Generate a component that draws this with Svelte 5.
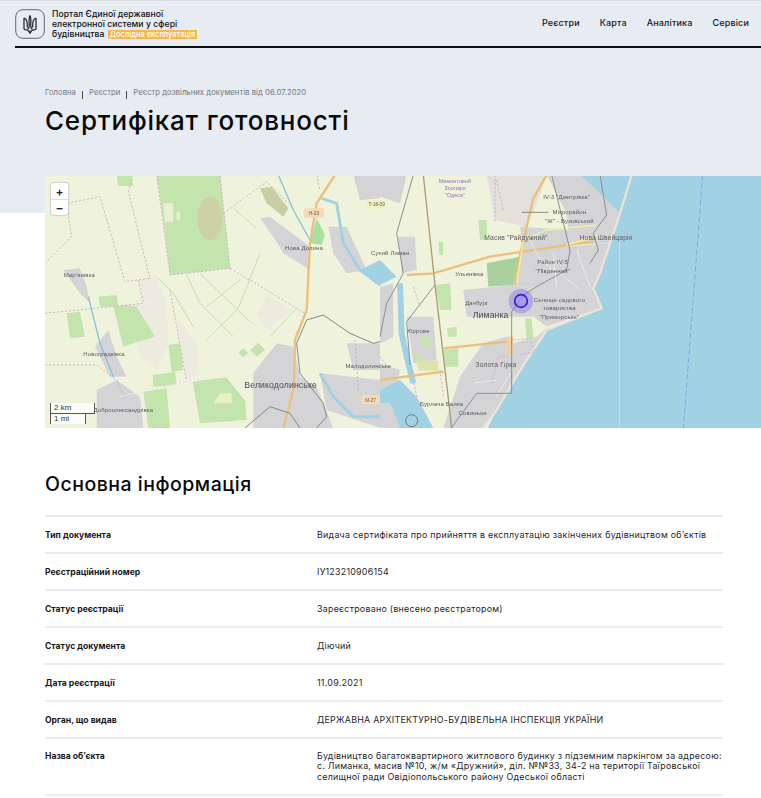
<script>
  const nav = ['Реєстри', 'Карта', 'Аналітика', 'Сервіси'];
  const crumbs = ['Головна', 'Реєстри', 'Реєстр дозвільних документів від 06.07.2020'];
  const rows = [
    ['Тип документа', 'Видача сертифіката про прийняття в експлуатацію закінчених будівництвом об’єктів'],
    ['Реєстраційний номер', 'ІУ123210906154'],
    ['Статус реєстрації', 'Зареєстровано (внесено реєстратором)'],
    ['Статус документа', 'Діючий'],
    ['Дата реєстрації', '11.09.2021'],
    ['Орган, що видав', 'ДЕРЖАВНА АРХІТЕКТУРНО-БУДІВЕЛЬНА ІНСПЕКЦІЯ УКРАЇНИ'],
    ['Назва об’єкта', 'Будівництво багатоквартирного житлового будинку з підземним паркінгом за адресою: с. Лиманка, масив №10, ж/м «Дружний», діл. №№33, 34-2 на території Таїровської селищної ради Овідіопольського району Одеської області']
  ];
  const leftGreen = [
    '470,15 660,15 690,295 510,315 490,150', '350,15 395,15 400,48 355,48', '295,380 350,375 355,410 300,410',
    '200,430 240,425 255,500 210,505', '340,410 380,405 410,410 465,500 400,520 370,530', '505,525 540,520 550,600 515,605',
    '458,615 525,605 530,645 460,650', '430,665 500,655 510,774 445,774', '578,635 680,620 735,690 740,750 600,760',
    '715,548 730,535 745,550 728,562', '750,540 775,518 795,540 770,560'
  ];
  const leftGrey = [
    '780,145 810,140 930,230 930,300 850,250 830,215', '985,170 1040,170 1100,300 1040,310 1000,250',
    '190,300 240,295 260,350 270,400 240,370', '285,530 325,480 350,560 380,620 330,620',
    '290,660 350,630 420,680 430,774 290,774', '760,610 830,520 880,530 900,620 950,650 1000,774 760,774',
    '1040,520 1140,520 1140,600 1060,600', '960,610 1140,630 1140,774 980,720', '1060,15 1140,15 1140,85 1080,90'
  ];
  const leftBeige = ['415,330 470,320 500,400 430,400', '530,440 590,520 600,610 560,630', '380,405 500,400 505,525 470,600 420,560', '800,380 880,420 800,480 770,430'];
  const rightGrey = [
    '500,15 750,15 720,130 690,220 570,225 560,130',
    '420,170 570,180 570,235 430,240',
    '420,240 690,220 660,310 640,355 600,400 470,360 405,345',
    '250,360 400,345 470,360 640,355 665,415 600,435 500,470 460,440 390,440 260,440',
    '310,520 380,500 400,520 470,500 500,475 440,570 400,635 350,720 310,774 190,774 240,620',
    '0,350 40,340 40,500 0,520', '55,200 105,200 110,300 65,310', '80,440 160,440 170,570 100,580', '0,580 60,600 50,660 0,660',
    '0,15 80,15 60,100 0,80', '0,700 30,700 60,774 0,774'
  ];
  const rightGreen = ['320,280 420,260 400,345 325,350', '165,345 210,340 215,420 180,420', '200,475 230,470 230,500 205,500', '120,500 150,500 150,530 125,530', '105,550 125,550 125,575 105,575', '175,215 190,215 190,255 178,255', '295,150 320,150 320,210 300,210', '435,445 455,445 460,505 440,510', '190,540 235,535 235,590 195,590', '110,572 175,572 175,602 115,602'];
</script>

<div class="page">
  <section class="hero">
    <header class="top">
      <a class="brand" href="#top">
        <svg class="logo" viewBox="0 0 30 30" width="30" height="30" aria-hidden="true">
          <path d="M9 .7h12c5.5 0 8.3 2.8 8.3 8.3v12c0 5.5-2.8 8.3-8.3 8.3H9C3.5 29.3.7 26.500.7 21V9C.7 3.500 3.500.700 9 .700z" fill="none" stroke="#56585c" stroke-width=".9"/>
          <path d="M15 6.500c-1 2-1.100 5-.7 9.500.1 2-.4 3.500-1.600 4.500M15 6.500c1 2 1.100 5 .7 9.500-.1 2 .4 3.500 1.600 4.500M9 9v10.500c0 1 .9 1.500 3.700 1.500M21 9v10.500c0 1-.9 1.500-3.700 1.500M9 9c2 .9 3.300 3 3.300 6.500v3M21 9c-2 .9-3.300 3-3.300 6.500v3M12.700 21l2.300 3.200 2.300-3.200M15 21.500v1" fill="none" stroke="#26282c" stroke-width="1.250"/>
        </svg>
        <div class="title">
          <div>Портал Єдиної державної</div>
          <div>електронної системи у сфері</div>
          <div>будівництва <span class="badge">Дослідна експлуатація</span></div>
        </div>
      </a>
      <nav class="nav">
        {#each nav as item}<a href="#top">{item}</a>{/each}
      </nav>
    </header>
    <div class="heading">
      <div class="crumbs">
        {#each crumbs as c, i}
          {#if i > 0}<i class="sep"></i>{/if}<span>{c}</span>
        {/each}
      </div>
      <h1>Сертифікат готовності</h1>
    </div>
  </section>

  <div class="map">
    <svg class="tiles" viewBox="0 0 716 252" preserveAspectRatio="none" aria-hidden="true">
      <defs><filter id="soft" x="0" y="0" width="100%" height="100%"><feGaussianBlur stdDeviation=".7"/></filter></defs>
      <g filter="url(#soft)">
        <rect width="716" height="252" fill="#f0f3dc"/>
        <g transform="translate(-45 -6) scale(.33333)">
          {#each leftBeige as p}<polygon points={p} fill="#edebe0"/>{/each}
          {#each leftGreen as p}<polygon points={p} fill="#c4e4ae"/>{/each}
          {#each leftGrey as p}<polygon points={p} fill="#d4d4d6"/>{/each}
          <polygon points="505,650 575,640 585,774 515,774" fill="#f0f3dc"/>
          <polygon points="490,100 520,100 520,155 495,155" fill="#ecefd8"/>
          <polygon points="530,125 540,125 540,150 530,150" fill="#ecefd8"/>
          <polygon points="640,700 660,670 695,670 695,700" fill="#e4f1c9"/>
          <ellipse cx="630" cy="145" rx="38" ry="66" fill="#cdd2a6"/>
          <polygon points="780,55 815,50 865,115 850,140 800,100" fill="#c9cda4"/>
          <polygon points="950,145 975,195 965,225 930,220" fill="#a8e0a0"/>
          <path d="M560 315l40 85 100 100M600 310l155 150M620 410l100-80M620 510l95-95 65-165M810 500l80-85M475 325l45 45 60 100M700 115l70 60" fill="none" stroke="#c0e0a8" stroke-width="3"/>
          <path d="M135 280l80-80-15-100 100-20 75 255 75-10-65-260 15-50M470 15l40 300 180-20-30-280M690 295l225 135-25 60M135 430l295-30-15-70M670 130l130-95 65 65M510 360l50 275 120-15M135 585h155l60 45 20 50 60-15 130-30M950 15l10 45M1065 510l10 150" fill="none" stroke="#cba8cb" stroke-width="2.500" stroke-dasharray="7 5"/>
          <path d="M835 15l45 105 50 90M265 380l35 140 40 100" fill="none" stroke="#86c0d8" stroke-width="4"/>
          <path d="M1140 345l-60-45-50-80-20-120-45-15" fill="none" stroke="#a0d2e3" stroke-width="9"/>
          <path d="M1080 300l60-30v75z" fill="#a0d2e3"/>
          <path d="M960 610l40 70 60 60h80" fill="none" stroke="#a0d2e3" stroke-width="9"/>
          <path d="M1005 15l-55 85-20 120-10 200-35 90-3 140-32 124" fill="none" stroke="#edbf7b" stroke-width="7"/>
          <path d="M735 774l75-64 60 20 30 44M1140 515l-20 5-70-30-80-55-50 15-30 70 10 90 70 90 10 40-30 34" fill="none" stroke="#86868a" stroke-width="3"/>
          <path d="M360 680l70-15 130-30 120-15 55 70" fill="none" stroke="#fff" stroke-width="2"/>
          <g class="road"><rect x="912" y="115" width="60" height="28" rx="5" fill="#f7d9b6"/><text x="942" y="135">Н-33</text></g>
          <g class="road"><rect x="1085" y="675" width="55" height="28" rx="5" fill="#f7d9b6"/><text x="1112" y="695">М-27</text></g>
          <g class="road"><rect x="1100" y="90" width="60" height="26" rx="4" fill="#f3f0c8"/><text x="1130" y="108">Т-16-09</text></g>
          <g class="lbl">
            <text x="238" y="320">Мар'янівка</text><text x="312" y="558">Новоградківка</text><text x="370" y="727">Доброолександрівка</text>
            <text x="912" y="240">Нова Долина</text>
            <text class="big" x="842" y="654">Великодолинське</text>
          </g>
        </g>
        <g transform="translate(335 -6) scale(.33333)">
          <polygon points="320,15 500,15 470,100 440,170 345,150" fill="#e2e1da"/>
          {#each rightGrey as p}<polygon points={p} fill="#d4d4d6"/>{/each}
          {#each rightGreen as p}<polygon points={p} fill={p.startsWith('320') ? '#a9d1a0' : p.startsWith('110') ? '#dfe3a8' : '#c4e4ae'}/>{/each}
          <polygon points="0,270 50,320 0,345" fill="#a0d2e3"/>
          <polygon points="0,660 60,630 110,680 160,774 60,774 30,700 0,700" fill="#a0d2e3"/>
          <path d="M60 340l5 150 15 70 20 80" fill="none" stroke="#a0d2e3" stroke-width="18"/>
          <polygon points="587,0 755,15 2000,0 2000,800 310,800 350,720 400,635 440,570 500,480 600,440 665,415 640,355 660,310 690,220 720,130" fill="#a0d2e3"/>
          <path d="M755 15l-35 115-30 90-30 90-20 45 25 60-65 25-100 40-60 90-40 65-50 85-40 54" fill="none" stroke="#ebe4d8" stroke-width="7"/>
          <path d="M718 210v570" stroke="#d3e9f0" stroke-width="2"/>
          <path d="M968 15l-58 760" stroke="#7b9fdf" stroke-width="2.500" stroke-dasharray="16 9" fill="none"/>
          <path d="M80 315l80-5 170-50 230-35 80-10M0 630l190-25M190 535l190-20" fill="none" stroke="#edbf7b" stroke-width="7"/>
          <path d="M500 15l-40 70-40 170-15 90" fill="none" stroke="#edbf7b" stroke-width="7"/>
          <path d="M410 340l20-130 70-30 150-15M560 225l100-30" fill="none" stroke="#f2ef9d" stroke-width="4"/>
          <path d="M450 210l30 60 60 40 60 50M520 250l10 100M590 240l40 110M300 470l60-10M350 680l40-70M280 640l70-10" fill="none" stroke="#eeeeee" stroke-width="2.500"/>
          <path d="M380 500h20v50h-20z" fill="#f5cf9f"/>
          <path d="M130 15l35 330 40 340 10 90" fill="none" stroke="#ab9a76" stroke-width="4"/>
          <path d="M100 15L50 190l20 120-50 90-20 100M165 345l-85 110 10 130M515 15l55 225-10 60-90 50-40 25-35 50v245H290l-95 130M660 15l20 120-40 55 15 50-25 40" fill="none" stroke="#8f8f93" stroke-width="3"/>
          <path d="M425 127h80" stroke="#777" stroke-width="2.500"/>
          <path d="M345 15v140M350 30l20 90M320 15l30 30" stroke="#cba8cf" fill="none" stroke-width="2.500" stroke-dasharray="7 5"/>
          <path d="M400 510l50-5 15 40-50 10M335 640l20-80 30 0M0 560l30 40M90 580l20 100M100 350l20 60M180 600l10 80" stroke="#cba8cf" fill="none" stroke-width="2.500" stroke-dasharray="7 5"/>
          <circle cx="95" cy="752" r="18" fill="none" stroke="#666" stroke-width="2.500"/>
          <g class="lbl">
            <text x="225" y="38" class="pur">Мамонтовий</text><text x="225" y="60" class="pur">Зоопарк</text><text x="225" y="82" class="pur">"Одеса"</text>
            <text x="560" y="88">ІV-3 "Дмитрівка"</text><text x="568" y="131">Мікрорайон</text><text x="568" y="158">"Ж" - Вузовський</text>
            <text class="mid" x="408" y="211">Масив "Райдужний"</text><text class="mid" x="678" y="210">Нова Швейцарія</text>
            <text x="518" y="282">Район ІV-5</text><text x="518" y="309">"Південний"</text><text x="268" y="319">Ульянівка</text>
            <text x="290" y="405">Дачбург</text><text x="538" y="396">Селище садового</text><text x="538" y="419">товариства</text><text x="538" y="446">"Приморське"</text>
            <text class="big" x="332" y="443">Лиманка</text><text x="115" y="488">Хіррове</text><text class="mid" x="348" y="592">Золота Гірка</text>
            <text x="185" y="709">Бурлача Балка</text><text x="278" y="734">Совиньон</text>
            <text x="30" y="254">Сухий Лиман</text><text x="-35" y="594">Малодолинське</text>
          </g>
          <circle cx="423" cy="393" r="37" fill="#7a68e6" opacity=".38"/>
          <circle cx="423" cy="393" r="19" fill="#9b8cf0" fill-opacity=".45" stroke="#3a17dc" stroke-width="5"/>
        </g>
      </g>
    </svg>
    <div class="zoom">
      <button type="button">+</button>
      <button type="button">−</button>
    </div>
    <div class="scale">
      <div class="km">2 km</div>
      <div class="mi">1 mi</div>
    </div>
  </div>

  <main class="info">
    <h2>Основна інформація</h2>
    <div class="table">
      {#each rows as r}
        <div class="row">
          <div class="label">{r[0]}</div>
          <div class="value">{r[1]}</div>
        </div>
      {/each}
    </div>
  </main>
</div>

<style>
  :global(body) { margin: 0; background: #fff; }
  .page { width: 761px; height: 798px; overflow: hidden; font-family: Inter, "Liberation Sans", sans-serif; color: #101114; }
  .hero { height: 213px; background: #e6ecf2; border-top: 1px solid #dcdfe2; box-sizing: border-box; }
  .top { margin-left: 15px; height: 47px; box-sizing: border-box; border-bottom: 2px solid #0c0d0f; display: flex; justify-content: space-between; align-items: flex-start; padding: 8px 12px 0 0; }
  .brand { display: flex; gap: 7px; color: inherit; text-decoration: none; }
  .logo { display: block; flex: none; }
  .title { font-size: 8.6px; line-height: 10.2px; font-weight: 500; letter-spacing: .05px; }
  .badge { display: inline-block; background: #f6b64c; color: #fff; font-size: 7.400px; line-height: 9px; padding: 0 2px; border-radius: 1px; font-weight: 500; margin-left: 1px; }
  .nav { display: flex; gap: 20px; padding-top: 8px; }
  .nav a { font-size: 9px; line-height: 11px; font-weight: 500; color: #17181b; text-decoration: none; letter-spacing: .15px; }
  .heading { padding: 40px 0 0 45px; }
  .crumbs { display: flex; align-items: flex-start; font-size: 7.7px; line-height: 9px; color: #74787e; height: 12px; letter-spacing: .04px; }
  .sep { width: 1px; height: 8px; margin: 3px 6px 0; background: #44474c; }
  h1 { margin: 5px 0 0; font-size: 26px; line-height: 32px; font-weight: 500; letter-spacing: .8px; color: #08090b; }
  .map { position: relative; height: 252px; margin: -37px 0 0 45px; overflow: hidden; background: #f0f3dc; }
  .tiles { display: block; width: 716px; height: 252px; }
  .lbl text { font-family: "Liberation Sans", Arial, sans-serif; font-size: 18px; letter-spacing: .4px; fill: #5a5a60; text-anchor: middle; }
  .lbl .big { font-size: 26px; fill: #4a4a50; }
  .lbl .mid { font-size: 20px; }
  .lbl .pur { fill: #8e6fc0; font-size: 16px; }
  .road text { font-family: "Liberation Sans", Arial, sans-serif; font-size: 14px; fill: #6a5a48; text-anchor: middle; }
  .zoom { position: absolute; left: 6px; top: 7px; width: 17px; background: #fff; border-radius: 3px; box-shadow: 0 0 2px rgba(0,0,0,.45); }
  .zoom button { display: block; width: 17px; height: 16px; padding: 0; border: 0; background: none; font: 600 12px/15px Inter, sans-serif; color: #222; }
  .zoom button + button { border-top: 1px solid #ddd; }
  .scale { position: absolute; left: 5px; bottom: 4px; font: 8px/9px "Liberation Sans", Arial, sans-serif; color: #333; }
  .km { width: 45px; height: 11px; padding-left: 3px; box-sizing: border-box; background: rgba(255,255,255,.7); border: 1px solid #555; border-width: 0 1.500px 1.500px; }
  .mi { width: 36px; height: 10px; padding-left: 3px; box-sizing: border-box; background: rgba(255,255,255,.7); border: 1px solid #555; border-width: 0 1.500px; }
  .info { padding: 44px 38px 0 45px; }
  h2 { margin: 0; font-size: 19.500px; line-height: 24px; font-weight: 500; letter-spacing: .5px; color: #08090b; }
  .table { margin-top: 19px; border-top: 2px solid #e6ecf2; }
  .row { display: grid; grid-template-columns: 272px 1fr; min-height: 35px; box-sizing: content-box; align-items: center; border-bottom: 2px solid #e6ecf2; font-size: 8.900px; line-height: 10.400px; }
  .row:last-child { align-items: start; padding: 11px 0 12px; min-height: 0; }
  .label { font-size: 8.600px; font-weight: 700; color: #16171a; padding-top: 1px; }
  .value { color: #24262a; letter-spacing: .25px; padding-top: 1px; }
</style>
